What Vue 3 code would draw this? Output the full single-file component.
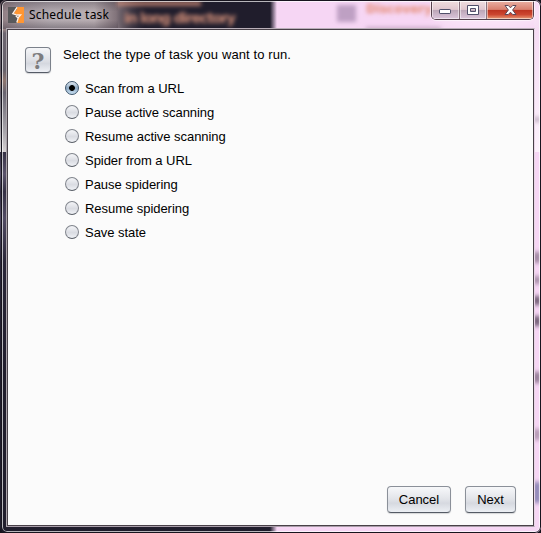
<script setup>
import { ref } from 'vue'

const tasks = [
  'Scan from a URL',
  'Pause active scanning',
  'Resume active scanning',
  'Spider from a URL',
  'Pause spidering',
  'Resume spidering',
  'Save state',
]
const selected = ref(0)
</script>

<template>
  <div class="window">
    <div class="glass" aria-hidden="true">
      <svg width="541" height="533" viewBox="0 0 541 533">
        <defs>
          <linearGradient id="split" x1="0" x2="1">
            <stop offset="0" stop-color="#201d2c" />
            <stop offset="1" stop-color="#f6d6f4" />
          </linearGradient>
          <linearGradient id="haze" x1="0" x2="1">
            <stop offset="0" stop-color="#8d7b80" />
            <stop offset=".12" stop-color="#a1949a" />
            <stop offset=".35" stop-color="#b3aab0" />
            <stop offset=".65" stop-color="#b8adb1" />
            <stop offset=".8" stop-color="#9b8a8f" stop-opacity=".8" />
            <stop offset="1" stop-color="#4b4350" stop-opacity="0" />
          </linearGradient>
          <linearGradient id="shade" x1="0" x2="0" y1="0" y2="1">
            <stop offset="0" stop-color="#3b3440" stop-opacity=".4" />
            <stop offset=".4" stop-color="#3b3440" stop-opacity="0" />
            <stop offset=".7" stop-color="#3b3440" stop-opacity="0" />
            <stop offset="1" stop-color="#3b3440" stop-opacity=".4" />
          </linearGradient>
          <linearGradient id="leftEdge" x1="0" x2="0" y1="0" y2="1">
            <stop offset="0" stop-color="#968489" />
            <stop offset=".07" stop-color="#9b8788" />
            <stop offset=".1" stop-color="#6d6670" />
            <stop offset=".38" stop-color="#67616b" />
            <stop offset=".46" stop-color="#8f766f" />
            <stop offset=".55" stop-color="#686470" />
            <stop offset=".85" stop-color="#aaa7ad" />
            <stop offset="1" stop-color="#d6d1d3" />
          </linearGradient>
          <linearGradient id="leftLow" x1="0" x2="0" y1="0" y2="1">
            <stop offset="0" stop-color="#353044" />
            <stop offset=".1" stop-color="#5a536b" />
            <stop offset=".18" stop-color="#343044" />
            <stop offset=".3" stop-color="#514b63" />
            <stop offset=".5" stop-color="#292638" />
            <stop offset="1" stop-color="#201d2c" />
          </linearGradient>
          <linearGradient id="rightTop" x1="0" x2="0" y1="0" y2="1">
            <stop offset="0" stop-color="#f5daf3" />
            <stop offset="1" stop-color="#fcf1fb" />
          </linearGradient>
          <filter id="soft" x="-50%" y="-80%" width="200%" height="260%"><feGaussianBlur stdDeviation="2.1" /></filter>
          <filter id="wide" x="-50%" y="-80%" width="200%" height="260%"><feGaussianBlur stdDeviation="7" /></filter>
        </defs>
        <rect width="541" height="533" fill="#201d2c" />
        <rect x="275" width="266" height="533" fill="#f6d6f4" />
        <rect x="270" width="7" height="533" fill="url(#split)" />
        <rect y="20" width="8" height="132" fill="url(#leftEdge)" />
        <rect y="152" width="8" height="220" fill="url(#leftLow)" />
        <rect x="534" y="20" width="7" height="132" fill="url(#rightTop)" />
        <rect width="145" height="29" fill="url(#haze)" />
        <rect width="118" height="29" fill="url(#shade)" />
        <g filter="url(#soft)" class="ghost">
          <rect x="117" y="1" width="84" height="5" opacity=".75" />
          <text x="124" y="23" textLength="112">in long directory</text>
          <rect x="337" y="5" width="19" height="17" fill="#b092b8" opacity=".8" />
          <text x="366" y="13" textLength="66" class="peach">Discovery</text>
          <rect x="366" y="27" width="75" height="4" fill="#aa8ba9" opacity=".6" />
        </g>
        <ellipse cx="490" cy="15" rx="55" ry="13" fill="#fff" opacity=".4" filter="url(#wide)" />
        <g filter="url(#soft)" fill="#756078">
          <rect x="533" y="117" width="8" height="5" opacity=".4" />
          <rect x="533" y="252" width="8" height="11" opacity=".65" />
          <rect x="533" y="276" width="8" height="8" opacity=".6" />
          <rect x="533" y="296" width="8" height="9" />
          <rect x="533" y="316" width="8" height="10" />
          <rect x="533" y="372" width="8" height="11" opacity=".75" />
          <rect x="533" y="429" width="8" height="11" opacity=".5" />
          <rect x="533" y="482" width="8" height="21" fill="#8f88b7" />
        </g>
      </svg>
    </div>

    <header class="titlebar">
      <svg class="logo" width="16" height="16" viewBox="0 0 16 16">
        <path fill="#59595b" d="M0 0h9v16H0z" />
        <path fill="#ff9633" d="M9 0h7v16H9z" />
        <path fill="#ff9633" d="M9 2 5.5 6.6 9 7.5z" />
        <path fill="#59595b" d="M8.5 8.3h3.3L8.5 14z" />
        <path fill="none" stroke="#fff1e6" stroke-width="1.3" d="M9 .3 4.8 6.6 9 8h3.6L9.8 11M7.8 9l2.4 2-1.4 4.5" />
      </svg>
      <h1 class="title">Schedule task</h1>
      <div class="controls">
        <button class="control minimize" aria-label="Minimize">
          <svg width="13" height="12" viewBox="0 0 13 12"><rect x=".5" y="5.5" width="11" height="4" rx=".6" fill="#fff" stroke="#50506a" /></svg>
        </button>
        <button class="control maximize" aria-label="Maximize">
          <svg width="13" height="12" viewBox="0 0 13 12"><path d="M.5 1.5h11v9H.5zM3.5 4.5v3h5v-3z" fill="#fff" fill-rule="evenodd" stroke="#50506a" /></svg>
        </button>
        <button class="control close" aria-label="Close">
          <svg width="13" height="12" viewBox="0 0 13 12"><path d="M1 1.5h3.3l2.2 2.3 2.2-2.3H12L8.6 6l3.4 4.5H8.7L6.5 8.2l-2.2 2.3H1L4.4 6z" fill="#fff" stroke="#5d4858" /></svg>
        </button>
      </div>
    </header>

    <main class="content">
      <div class="step">
        <div class="help">?</div>
        <section class="form">
          <p class="prompt">Select the type of task you want to run.</p>
          <ul class="options">
            <li v-for="(task, i) in tasks" :key="task" class="option" @click="selected = i">
              <span class="radio" :class="{ checked: selected === i }"></span>
              <span class="label">{{ task }}</span>
            </li>
          </ul>
        </section>
      </div>
      <footer class="actions">
        <button class="action cancel">Cancel</button>
        <button class="action next">Next</button>
      </footer>
    </main>
  </div>
</template>

<style>
body {
  margin: 0;
  background: #15131c;
}
</style>

<style scoped>
.window {
  position: relative;
  box-sizing: border-box;
  width: 541px;
  height: 533px;
  padding: 2px 6px 6px 6px;
  overflow: hidden;
  border-radius: 6px;
  display: flex;
  flex-direction: column;
  font-family: "Liberation Sans", sans-serif;
  font-size: 13px;
  color: #000;
}
.window::after {
  content: "";
  position: absolute;
  inset: 0 0 0 1px;
  border: 1px solid #17141e;
  border-radius: 6px;
  box-shadow: inset 0 0 0 1px rgba(255, 255, 255, .68);
  pointer-events: none;
}
.glass {
  position: absolute;
  inset: 0;
}
.glass svg {
  display: block;
}
.ghost {
  fill: #d08e78;
  font: 700 14px "DejaVu Sans", sans-serif;
}
.ghost .peach {
  fill: #e58a72;
  font-size: 12px;
}
.titlebar {
  position: relative;
  display: flex;
  height: 26px;
  flex: none;
  align-items: flex-start;
  padding-left: 2px;
}
.logo {
  margin-top: 5px;
}
.title {
  margin: 4px 0 0 5px;
  font: 400 12px/18px "Noto Sans", "Open Sans", sans-serif;
  letter-spacing: .2px;
  white-space: nowrap;
}
.controls {
  display: flex;
  box-sizing: border-box;
  height: 19px;
  margin: -1px 1px 0 auto;
  border: 1px solid #55414d;
  border-top: 0;
  border-radius: 0 0 5px 5px;
  overflow: hidden;
  box-shadow: 0 0 0 1px rgba(255, 255, 255, .55);
}
.control {
  box-sizing: border-box;
  height: 18px;
  padding: 0;
  border: 0;
  display: flex;
  align-items: center;
  justify-content: center;
  box-shadow: inset 0 0 0 1px rgba(255, 255, 255, .5);
}
.minimize,
.maximize {
  width: 28px;
  border-right: 1px solid #88727e;
  background: linear-gradient(#f0dedf, #e0c7cf 47%, #bba5b6 50%, #dcc6dc);
}
.maximize {
  width: 27px;
}
.close {
  width: 46px;
  background: linear-gradient(#eab0a4, #d8806f 47%, #bc3220 50%, #cc4630 75%, #e89b77);
}
.content {
  position: relative;
  flex: 1;
  display: flex;
  flex-direction: column;
  justify-content: space-between;
  border: 1px solid;
  border-color: #b9afb8 #e9d7e7 #a99ea9 #aaa4aa;
  background: #fbfbfb;
  box-shadow: inset 0 0 0 1px #484048;
}
.step {
  display: flex;
  padding: 18px 0 0 18px;
}
.help {
  box-sizing: border-box;
  width: 26px;
  height: 26px;
  flex: none;
  border: 1px solid #7b818b;
  border-bottom-color: #555b66;
  border-radius: 4px;
  background: linear-gradient(#f5f6f8, #dfe1e6 50%, #d5d8df 65%, #eef0f5);
  box-shadow: 0 1px 1px #d2d3d6;
  color: #7d7d7f;
  font: 700 22px/26px "DejaVu Serif", serif;
  text-align: center;
}
.form {
  margin-left: 12px;
}
.prompt {
  margin: 0;
  line-height: 16px;
  letter-spacing: .1px;
  white-space: nowrap;
}
.options {
  margin: 14px 0 0 2px;
  padding: 0;
  list-style: none;
}
.option {
  display: flex;
  align-items: center;
  height: 24px;
}
.radio {
  box-sizing: border-box;
  width: 14px;
  height: 14px;
  margin: 0 6px 2px 0;
  border: 1px solid #81858d;
  border-bottom-color: #585d66;
  border-radius: 50%;
  background: linear-gradient(#f4f5f8, #dadce2 55%, #f0f2f6);
}
.radio.checked {
  border-color: #3d556c;
  background: radial-gradient(circle at 50% 50%, #000 0 2.5px, transparent 3.3px), linear-gradient(#dfe8f1, #8faac3 50%, #c7dff2);
}
.label {
  white-space: nowrap;
  line-height: 16px;
  letter-spacing: -.04px;
}
.actions {
  display: flex;
  justify-content: flex-end;
  gap: 14px;
  padding: 0 18px 13px 0;
}
.action {
  box-sizing: border-box;
  height: 27px;
  padding: 0;
  border: 1px solid #8b9099;
  border-bottom-color: #555b65;
  border-radius: 4px;
  background: linear-gradient(#f7f8fa, #e2e4e9 48%, #d6d9e0 65%, #eceff4);
  box-shadow: 0 1px 1px #d5d6d8;
  color: #000;
  font: 13px/24px "Liberation Sans", sans-serif;
}
.cancel {
  width: 64px;
}
.next {
  width: 51px;
}
</style>
